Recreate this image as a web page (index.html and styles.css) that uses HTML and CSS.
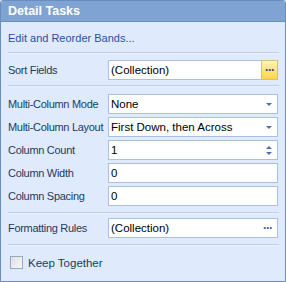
FILE: index.html
```html
<!DOCTYPE html>
<html>
<head>
<meta charset="utf-8">
<link rel="stylesheet" href="styles.css">
</head>
<body>
<div class="panel">
  <div class="header">Detail Tasks</div>
  <div class="body">
    <div class="link">Edit and Reorder Bands...</div>
    <div class="sep sep-a"></div>
    <div class="row row-sort">
      <span class="label">Sort Fields</span>
      <div class="field">
        <span class="value">(Collection)</span>
        <span class="btn-ellipsis hot">···</span>
      </div>
    </div>
    <div class="sep sep-b"></div>
    <div class="group">
      <div class="row">
        <span class="label">Multi-Column Mode</span>
        <div class="field"><span class="value">None</span><span class="arrow"></span></div>
      </div>
      <div class="row">
        <span class="label">Multi-Column Layout</span>
        <div class="field"><span class="value">First Down, then Across</span><span class="arrow"></span></div>
      </div>
      <div class="row">
        <span class="label">Column Count</span>
        <div class="field"><span class="value">1</span><span class="spin"><span class="up"></span><span class="down"></span></span></div>
      </div>
      <div class="row">
        <span class="label">Column Width</span>
        <div class="field"><span class="value">0</span></div>
      </div>
      <div class="row">
        <span class="label">Column Spacing</span>
        <div class="field"><span class="value">0</span></div>
      </div>
    </div>
    <div class="sep sep-c"></div>
    <div class="row row-fmt">
      <span class="label">Formatting Rules</span>
      <div class="field">
        <span class="value">(Collection)</span>
        <span class="btn-ellipsis">···</span>
      </div>
    </div>
    <div class="sep sep-d"></div>
    <label class="check">
      <span class="box"></span>
      <span>Keep Together</span>
    </label>
  </div>
</div>
</body>
</html>
```
FILE: styles.css
```css
html, body {
  margin: 0;
  padding: 0;
}
body {
  width: 286px;
  height: 282px;
  font-family: "Liberation Sans", Arial, sans-serif;
  font-size: 11px;
  background: #dfebfc;
}
.panel {
  box-sizing: border-box;
  width: 286px;
  height: 282px;
  border: 1px solid #6b8ec0;
  border-radius: 3px 3px 0 0;
  background: #dfebfc;
  display: flex;
  flex-direction: column;
}
.header {
  height: 20px;
  background: #7fa3d2;
  border-bottom: 1px solid #6a8dbf;
  color: #ffffff;
  font-weight: bold;
  font-size: 12.5px;
  line-height: 20px;
  padding-left: 7px;
  border-radius: 2px 2px 0 0;
}
.body {
  padding: 0 6px 0 7px;
  display: flex;
  flex-direction: column;
}
.link {
  margin-top: 9px;
  height: 14px;
  line-height: 14px;
  color: #2a4fa0;
  font-size: 11px;
}
.sep {
  height: 1px;
  background: #bccde6;
  border-bottom: 1px solid #eef4fe;
}
.sep-a { margin-top: 7px; }
.sep-b { margin-top: 5px; }
.sep-c { margin-top: 6px; }
.sep-d { margin-top: 6px; }
.row {
  display: flex;
  align-items: center;
  height: 20px;
}
.row-sort { margin-top: 6px; }
.row-fmt { margin-top: 4px; }
.group {
  margin-top: 7px;
  display: flex;
  flex-direction: column;
  gap: 3px;
}
.label {
  width: 100px;
  flex: none;
  color: #1e3a5f;
  font-size: 11px;
  letter-spacing: -0.3px;
  white-space: nowrap;
}
.field {
  box-sizing: border-box;
  position: relative;
  width: 170px;
  height: 20px;
  background: #ffffff;
  border: 1px solid #a9c0df;
  display: flex;
  align-items: center;
  padding-left: 2px;
}
.value {
  flex: 1;
  color: #000000;
  font-size: 11.5px;
  white-space: nowrap;
}
.btn-ellipsis {
  width: 17px;
  height: 18px;
  box-sizing: border-box;
  display: flex;
  align-items: center;
  justify-content: center;
  color: #3a5a96;
  font-weight: bold;
  font-size: 12px;
  letter-spacing: -1px;
  margin-right: 1px;
}
.btn-ellipsis.hot {
  height: 20px;
  margin-right: -1px;
  border: 1px solid #d6c07a;
  background: linear-gradient(#fff4c0, #ffe27a 50%, #ffd54c);
  color: #2d4a86;
}
.arrow {
  width: 0;
  height: 0;
  border-left: 3px solid transparent;
  border-right: 3px solid transparent;
  border-top: 3px solid #4f70a6;
  margin-right: 5px;
}
.spin {
  display: flex;
  flex-direction: column;
  gap: 3px;
  margin-right: 5px;
}
.spin .up {
  width: 0;
  height: 0;
  border-left: 3px solid transparent;
  border-right: 3px solid transparent;
  border-bottom: 3px solid #4f70a6;
}
.spin .down {
  width: 0;
  height: 0;
  border-left: 3px solid transparent;
  border-right: 3px solid transparent;
  border-top: 3px solid #4f70a6;
}
.check {
  margin-top: 10px;
  display: flex;
  align-items: center;
  gap: 5px;
  color: #1e3a5f;
  font-size: 11.5px;
  padding-left: 2px;
}
.box {
  box-sizing: border-box;
  width: 13px;
  height: 13px;
  border: 1px solid #9aa8bb;
  background: linear-gradient(135deg, #dcdfe4, #f7f8fa);
}
```
